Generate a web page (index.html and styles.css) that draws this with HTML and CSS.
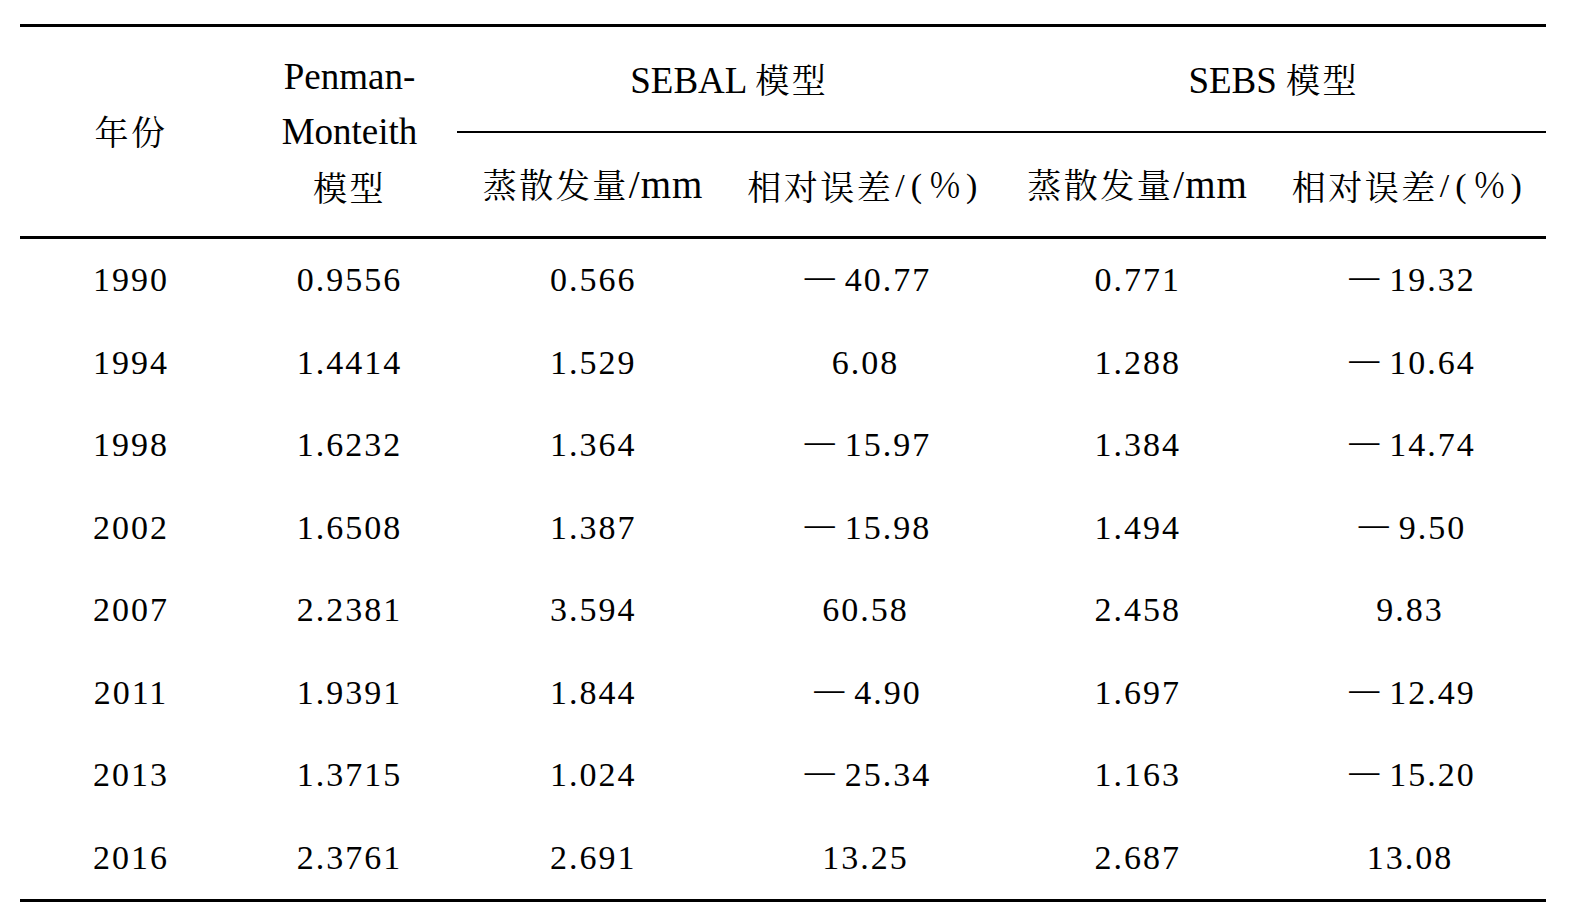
FILE: index.html
```html
<!DOCTYPE html>
<html lang="zh-CN">
<head>
<meta charset="utf-8">
<title>蒸散发量对比</title>
<link rel="stylesheet" href="styles.css">
</head>
<body>
<table class="data-table">
  <colgroup>
    <col class="c-year">
    <col class="c-pm">
    <col class="c-val">
    <col class="c-val">
    <col class="c-val">
    <col class="c-val">
  </colgroup>
  <thead>
    <tr class="head-1">
      <th rowspan="2" class="span-cell"><span class="zh">年份</span></th>
      <th rowspan="2" class="span-cell"><span class="ln">Penman-</span><span class="ln">Monteith</span><span class="ln zh">模型</span></th>
      <th colspan="2" class="group">SEBAL <span class="zh">模型</span></th>
      <th colspan="2" class="group">SEBS <span class="zh">模型</span></th>
    </tr>
    <tr class="head-2">
      <th><span class="zh">蒸散发量</span><span class="mm">/mm</span></th>
      <th><span class="zh">相对误差</span><span class="unit">/(<span class="pct">％</span>)</span></th>
      <th><span class="zh">蒸散发量</span><span class="mm">/mm</span></th>
      <th><span class="zh">相对误差</span><span class="unit">/(<span class="pct">％</span>)</span></th>
    </tr>
  </thead>
  <tbody>
    <tr><td>1990</td><td>0.9556</td><td>0.566</td><td><span class="minus">－</span>40.77</td><td>0.771</td><td><span class="minus">－</span>19.32</td></tr>
    <tr><td>1994</td><td>1.4414</td><td>1.529</td><td>6.08</td><td>1.288</td><td><span class="minus">－</span>10.64</td></tr>
    <tr><td>1998</td><td>1.6232</td><td>1.364</td><td><span class="minus">－</span>15.97</td><td>1.384</td><td><span class="minus">－</span>14.74</td></tr>
    <tr><td>2002</td><td>1.6508</td><td>1.387</td><td><span class="minus">－</span>15.98</td><td>1.494</td><td><span class="minus">－</span>9.50</td></tr>
    <tr><td>2007</td><td>2.2381</td><td>3.594</td><td>60.58</td><td>2.458</td><td>9.83</td></tr>
    <tr><td>2011</td><td>1.9391</td><td>1.844</td><td><span class="minus">－</span>4.90</td><td>1.697</td><td><span class="minus">－</span>12.49</td></tr>
    <tr><td>2013</td><td>1.3715</td><td>1.024</td><td><span class="minus">－</span>25.34</td><td>1.163</td><td><span class="minus">－</span>15.20</td></tr>
    <tr><td>2016</td><td>2.3761</td><td>2.691</td><td>13.25</td><td>2.687</td><td>13.08</td></tr>
  </tbody>
</table>
</body>
</html>
```

FILE: styles.css
```css
html, body {
  margin: 0;
  padding: 0;
  background: #ffffff;
}

body {
  color: #000000;
  font-family: "Liberation Serif", "Noto Serif CJK SC", "Noto Sans CJK SC", serif;
}

.data-table {
  margin: 24px 0 0 20px;
  width: 1526px;
  table-layout: fixed;
  border-collapse: separate;
  border-spacing: 0;
}

.c-year { width: 222px; }
.c-pm { width: 215px; }
.c-val { width: 272.25px; }

th, td {
  padding: 0;
  text-align: center;
  vertical-align: middle;
  font-weight: normal;
}

th {
  font-size: 37px;
  line-height: 55px;
}

.zh {
  font-family: "Noto Serif CJK SC", "Noto Sans CJK SC", serif;
  font-size: 34px;
  letter-spacing: 2.5px;
}

.mm {
  font-size: 39px;
  letter-spacing: 1px;
}

.unit {
  font-size: 34px;
  letter-spacing: 6px;
  margin-left: 2px;
  vertical-align: 3px;
}

.pct {
  font-family: "Noto Serif CJK SC", "Noto Sans CJK SC", serif;
  font-size: 34px;
  letter-spacing: 4px;
}

.ln {
  display: block;
}

.head-1 {
  height: 107px;
}

.head-1 th {
  border-top: 3px solid #000;
}

.head-1 .span-cell {
  border-bottom: 3px solid #000;
}

.head-2 {
  height: 108px;
}

.head-2 th {
  border-top: 2px solid #000;
  border-bottom: 3px solid #000;
}

tbody tr {
  height: 82.5px;
}

tbody tr:last-child {
  height: 85.5px;
}

tbody tr:last-child td {
  border-bottom: 3px solid #000;
}

td {
  font-size: 34px;
  line-height: 40px;
  letter-spacing: 2px;
}

.minus {
  font-family: "Noto Serif CJK SC", "Noto Sans CJK SC", serif;
  font-size: 40px;
  line-height: 24px;
  letter-spacing: 5px;
  vertical-align: -3px;
}
```
